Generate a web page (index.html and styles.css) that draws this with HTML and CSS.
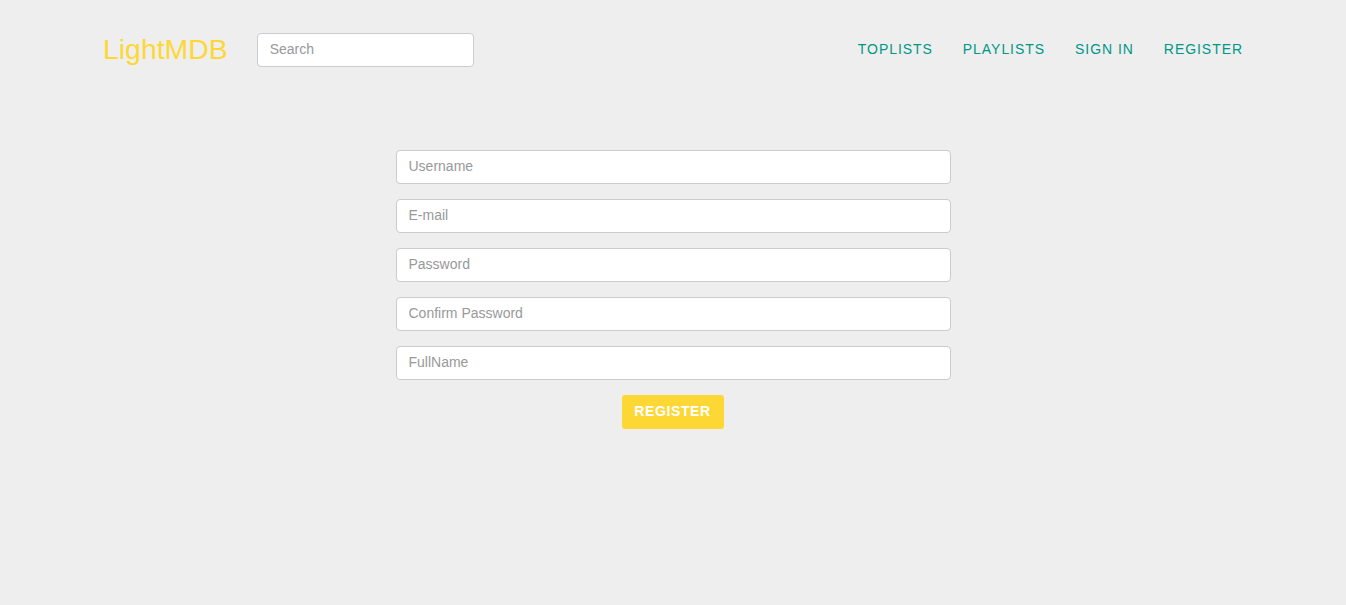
FILE: index.html
```html
<!DOCTYPE html>
<html lang="en">
<head>
<meta charset="utf-8">
<title>LightMDB</title>
<link rel="stylesheet" href="styles.css">
</head>
<body>
<header class="navbar">
  <div class="nav-left">
    <a class="brand" href="#">LightMDB</a>
    <input class="search" type="text" placeholder="Search">
  </div>
  <nav class="nav-links">
    <a href="#">Toplists</a>
    <a href="#">Playlists</a>
    <a href="#">Sign in</a>
    <a href="#">Register</a>
  </nav>
</header>
<main class="main">
  <form class="register-form">
    <input class="field" type="text" placeholder="Username">
    <input class="field" type="text" placeholder="E-mail">
    <input class="field" type="password" placeholder="Password">
    <input class="field" type="password" placeholder="Confirm Password">
    <input class="field" type="text" placeholder="FullName">
    <button class="btn" type="button">Register</button>
  </form>
</main>
</body>
</html>
```
FILE: styles.css
```css
* { box-sizing: border-box; }
html, body { margin: 0; padding: 0; }
body {
  background: #eeeeee;
  font-family: "Liberation Sans", Arial, Helvetica, sans-serif;
  font-size: 14px;
  color: #333;
  min-height: 605px;
}
.navbar {
  width: 1170px;
  margin: 0 auto;
  padding: 33px 15px 0;
  display: flex;
  justify-content: space-between;
  align-items: center;
  height: 67px;
}
.nav-left {
  display: flex;
  align-items: center;
}
.brand {
  color: #fdd835;
  font-size: 28.4px;
  text-decoration: none;
  line-height: 34px;
  margin-right: 29px;
  margin-top: -2px;
}
.search {
  width: 217px;
  height: 34px;
  border: 1px solid #cccccc;
  border-radius: 4px;
  background: #fff;
  padding: 0 12px 2px;
  font-family: inherit;
  font-size: 14px;
  color: #555;
}
.search::placeholder, .field::placeholder { color: #999; }
.nav-links {
  display: flex;
  margin-right: -15px;
}
.nav-links a {
  color: #009688;
  text-decoration: none;
  text-transform: uppercase;
  letter-spacing: 0.95px;
  font-size: 14px;
  padding: 0 15px;
  line-height: 34px;
  margin-top: -2px;
}
.nav-links a:first-child { padding-left: 16px; }
.nav-links a:last-child { padding-right: 15px; }
.main {
  padding-top: 83px;
}
.register-form {
  width: 555px;
  margin: 0 auto;
  display: flex;
  flex-direction: column;
  align-items: center;
}
.field {
  width: 100%;
  height: 34px;
  border: 1px solid #cccccc;
  border-radius: 4px;
  background: #fff;
  padding: 0 12px 2px;
  font-family: inherit;
  font-size: 14px;
  color: #555;
  margin-bottom: 15px;
}
.btn {
  width: 102px;
  height: 34px;
  border: none;
  border-radius: 3px;
  background: #fdd835;
  color: #fff;
  font-family: inherit;
  font-weight: bold;
  font-size: 14px;
  letter-spacing: 0.6px;
  text-transform: uppercase;
  padding: 0 0 2px;
  margin-left: -1px;
}
```
